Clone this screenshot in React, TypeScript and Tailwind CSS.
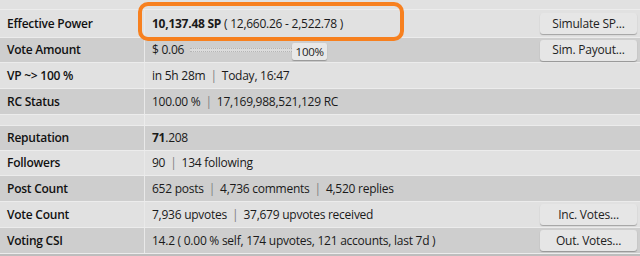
import type { ReactNode } from "react";

type Row = {
  label: string;
  value: ReactNode;
  action?: string;
  dark: boolean;
  h: string;
};

const Sep = () => <span className="mx-[5px] text-[#808080]">|</span>;

function Btn({ children }: { children: ReactNode }) {
  return (
    <button
      type="button"
      className="h-[21px] w-[97px] rounded-[3px] bg-[#e6e6e6] text-[12px] tracking-[-0.2px] text-[#222] shadow-[0_1px_1px_rgba(0,0,0,0.28)]"
    >
      {children}
    </button>
  );
}

const TOP_ROWS: Row[] = [
  {
    label: "Effective Power",
    value: (
      <span>
        <b className="font-bold">10,137.48 SP</b> ( 12,660.26 - 2,522.78 )
      </span>
    ),
    action: "Simulate SP...",
    dark: false,
    h: "h-[27px]",
  },
  {
    label: "Vote Amount",
    value: (
      <div className="flex items-center">
        <span>$ 0.06</span>
        <div className="ml-[6px] h-[4px] w-[102px] border-y border-dotted border-[#b5b5b5] bg-[#dcdcdc]" />
        <button
          type="button"
          className="mt-[2px] h-[17px] w-[35px] rounded-[2px] bg-[#e8e8e8] text-[11.5px] text-[#222] shadow-[0_1px_1px_rgba(0,0,0,0.28)]"
        >
          100%
        </button>
      </div>
    ),
    action: "Sim. Payout...",
    dark: true,
    h: "h-[24px]",
  },
  {
    label: "VP ~> 100 %",
    value: (
      <span>
        in 5h 28m<Sep />Today, 16:47
      </span>
    ),
    dark: false,
    h: "h-[25px]",
  },
  {
    label: "RC Status",
    value: (
      <span>
        100.00 %<Sep />17,169,988,521,129 RC
      </span>
    ),
    dark: true,
    h: "h-[25px]",
  },
];

const BOTTOM_ROWS: Row[] = [
  {
    label: "Reputation",
    value: (
      <span>
        <b className="font-bold">71</b>.208
      </span>
    ),
    dark: true,
    h: "h-[24px]",
  },
  {
    label: "Followers",
    value: (
      <span>
        90<Sep />134 following
      </span>
    ),
    dark: false,
    h: "h-[24px]",
  },
  {
    label: "Post Count",
    value: (
      <span>
        652 posts<Sep />4,736 comments<Sep />4,520 replies
      </span>
    ),
    dark: true,
    h: "h-[25px]",
  },
  {
    label: "Vote Count",
    value: (
      <span>
        7,936 upvotes<Sep />37,679 upvotes received
      </span>
    ),
    action: "Inc. Votes...",
    dark: false,
    h: "h-[25px]",
  },
  {
    label: "Voting CSI",
    value: <span>14.2 ( 0.00 % self, 174 upvotes, 121 accounts, last 7d )</span>,
    action: "Out. Votes...",
    dark: true,
    h: "h-[25px]",
  },
];

function InfoRow({ row }: { row: Row }) {
  const bg = row.dark ? "bg-[#cecece]" : "bg-[#e1e1e1]";
  return (
    <div className={`grid ${row.h} grid-cols-[144px_1fr] ${bg}`}>
      <div className="flex items-center pl-[7px] font-semibold tracking-[-0.25px] text-[#111]">
        {row.label}
      </div>
      <div className="flex items-center justify-between border-l border-[#e9e9e9] pl-[7px] pr-[3px]">
        <div className="whitespace-nowrap tracking-[-0.25px]">{row.value}</div>
        {row.action && <Btn>{row.action}</Btn>}
      </div>
    </div>
  );
}

export default function App() {
  return (
    <div
      className="relative h-[256px] w-[640px] overflow-hidden bg-[#ececec] text-[12px] text-[#1a1a1a]"
      style={{ fontFamily: '"Open Sans", sans-serif' }}
    >
      <div className="flex flex-col gap-px">
        <div className="h-[9px] bg-[#e1e1e1]" />
        {TOP_ROWS.map((r) => (
          <InfoRow key={r.label} row={r} />
        ))}
        <div className="grid h-[10px] grid-cols-[144px_1fr] bg-[#e1e1e1]">
          <div />
          <div className="border-l border-[#ececec]" />
        </div>
        {BOTTOM_ROWS.map((r) => (
          <InfoRow key={r.label} row={r} />
        ))}
        <div className="h-[2px] bg-[#bdbdbd]" />
      </div>

      {/* highlight annotation */}
      <div className="pointer-events-none absolute left-[138px] top-[2px] h-[39px] w-[266px] rounded-[10px] border-[4px] border-[#f7801f]" />
    </div>
  );
}
